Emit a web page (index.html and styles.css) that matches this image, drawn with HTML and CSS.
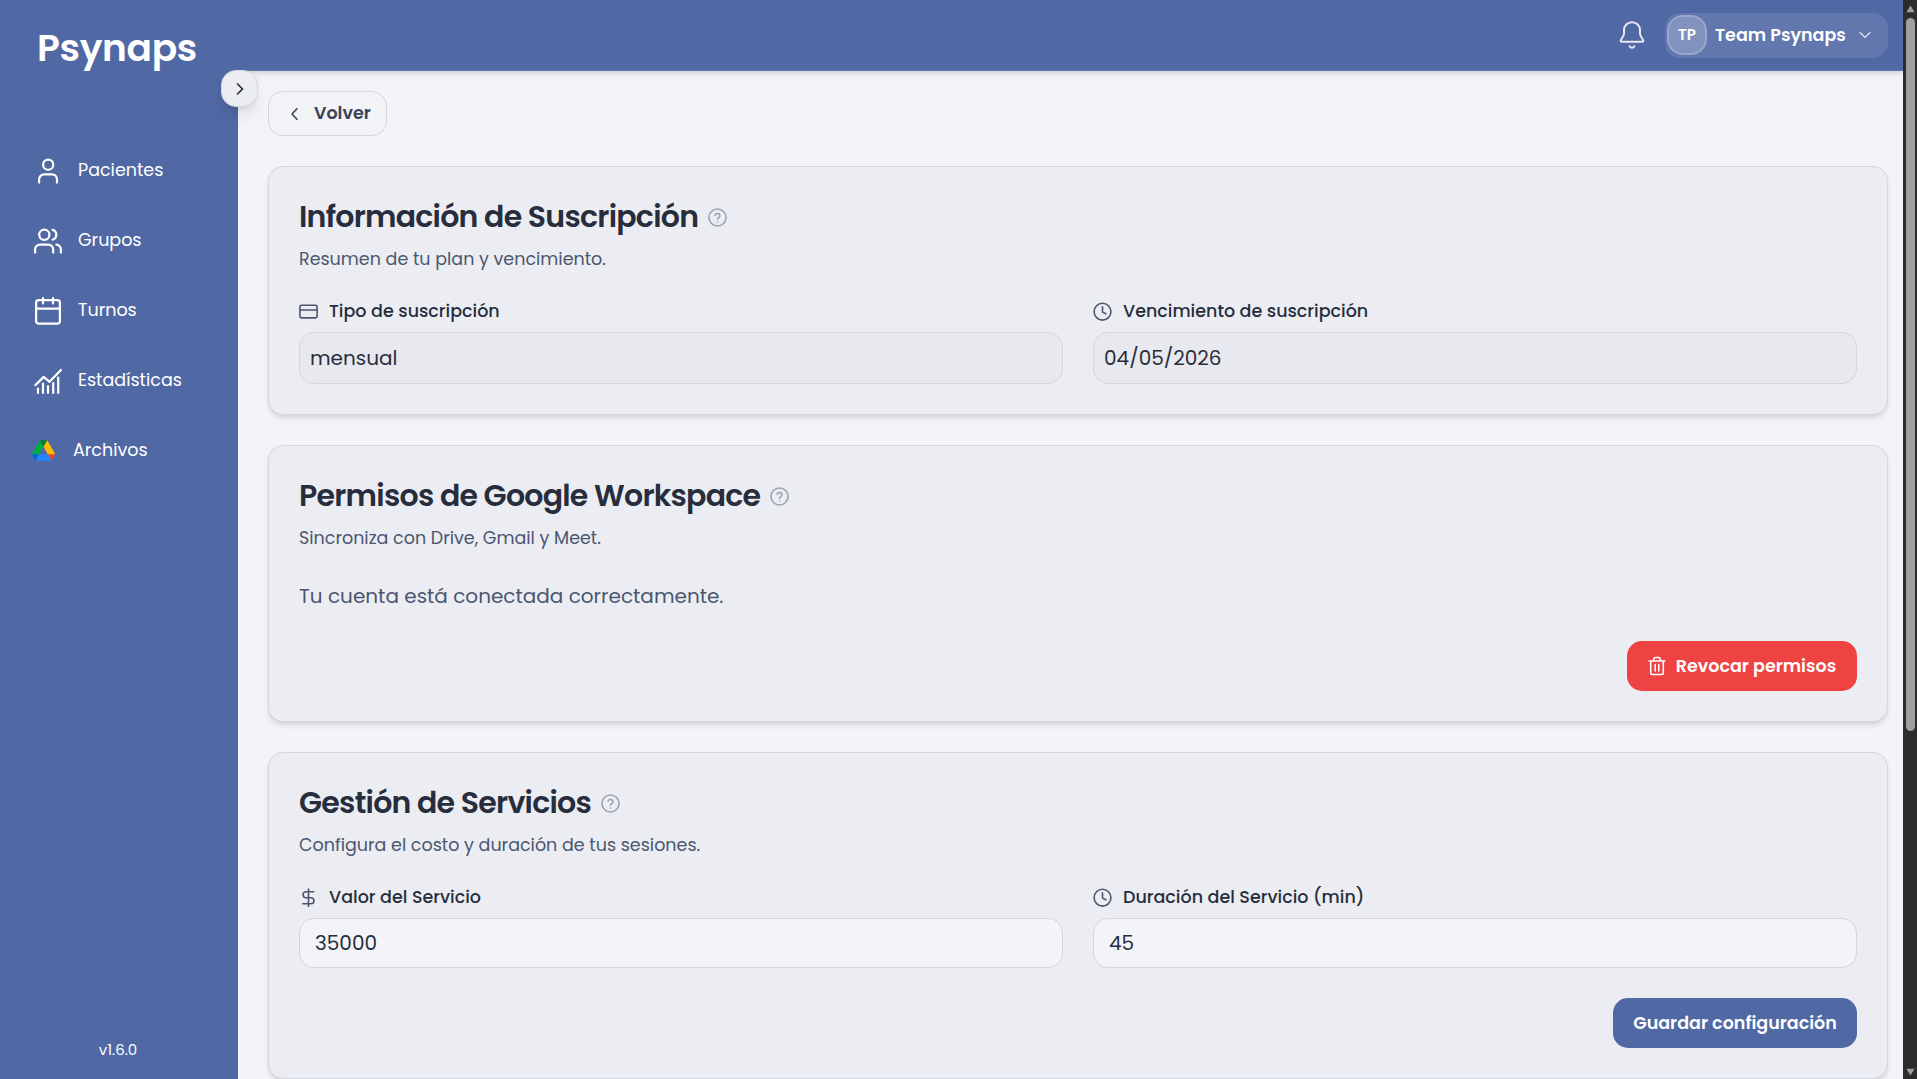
FILE: index.html
```html
<!DOCTYPE html>
<html lang="es">
<head>
    <meta charset="UTF-8">
    <meta name="viewport" content="width=device-width, initial-scale=1.0">
    <title>Psynaps - Configuración</title>
    <link rel="stylesheet" href="styles.css">
</head>
<body>

<div class="app">
    <!-- Sidebar -->
    <aside class="sidebar">
        <div class="brand">Psynaps</div>
        <nav class="menu">
            <a class="menu-item">
                <svg class="menu-icon" viewBox="0 0 28 30">
                    <circle cx="14.2" cy="8.7" r="5.1"/>
                    <path d="M5.1 26.6v-3.2a5 5 0 0 1 5-5h7.9a5 5 0 0 1 5 5v3.2"/>
                </svg>
                <span>Pacientes</span>
            </a>
            <a class="menu-item">
                <svg class="menu-icon" viewBox="0 0 28 30">
                    <circle cx="10.3" cy="8.8" r="5.1"/>
                    <path d="M18.6 3.9a5.1 5.1 0 0 1 0 9.8M1.1 26.6v-3a5 5 0 0 1 5-5h8.1a5 5 0 0 1 5 5v3M22.4 18.7a5 5 0 0 1 4.5 5v2.9"/>
                </svg>
                <span>Grupos</span>
            </a>
            <a class="menu-item">
                <svg class="menu-icon" viewBox="0 0 28 30">
                    <rect x="2.1" y="4.1" width="23.8" height="23.6" rx="2.6"/>
                    <path d="M2.1 12.6h23.8M9 2.2v5.2M19 2.2v5.2"/>
                </svg>
                <span>Turnos</span>
            </a>
            <a class="menu-item">
                <svg class="menu-icon" viewBox="0 0 28 30">
                    <path d="M1.4 19.1l8.3-8.2 5.8 4.9L26.9 4"/>
                    <path class="bars" d="M4 27.7v-6M9 27.7v-11M14 27.7v-8.4M19.2 27.7V16.3M24.2 27.7v-17"/>
                </svg>
                <span>Estadísticas</span>
            </a>
            <a class="menu-item archivos">
                <svg class="drive-icon" viewBox="0 0 87.3 78">
                    <path fill="#0066da" d="m6.6 66.85 3.85 6.65c.8 1.4 1.95 2.5 3.3 3.3l13.75-23.8h-27.5c0 1.55.4 3.1 1.2 4.5z"/>
                    <path fill="#00ac47" d="m43.65 25-13.75-23.8c-1.35.8-2.5 1.9-3.3 3.3l-25.4 44a9.06 9.06 0 0 0 -1.2 4.5h27.5z"/>
                    <path fill="#ea4335" d="m73.55 76.8c1.35-.8 2.5-1.9 3.3-3.3l1.6-2.75 7.65-13.25c.8-1.4 1.2-2.95 1.2-4.5h-27.5l5.85 11.5z"/>
                    <path fill="#00832d" d="m43.65 25 13.75-23.8c-1.35-.8-2.9-1.2-4.5-1.2h-18.5c-1.6 0-3.15.45-4.5 1.2z"/>
                    <path fill="#2684fc" d="m59.8 53h-32.3l-13.75 23.8c1.35.8 2.9 1.2 4.5 1.2h50.8c1.6 0 3.15-.45 4.5-1.2z"/>
                    <path fill="#ffba00" d="m73.4 26.5-12.7-22c-.8-1.4-1.95-2.5-3.3-3.3l-13.75 23.8 16.15 28h27.45c0-1.55-.4-3.1-1.2-4.5z"/>
                </svg>
                <span>Archivos</span>
            </a>
        </nav>
        <div class="version">v1.6.0</div>
        <button class="toggle" aria-label="Expandir menú">
            <svg viewBox="0 0 12 14"><path d="M3.5 2l5 5-5 5"/></svg>
        </button>
    </aside>

    <div class="page">
        <!-- Top bar -->
        <header class="topbar">
            <svg class="bell" viewBox="0 0 26 30">
                <path d="M13 2.2c-4.6 0-8 3.5-8 8.1v3.2c0 3-3.4 6.1-3.4 7.2 0 .7.5 1.1 1.2 1.1h20.4c.7 0 1.2-.4 1.2-1.1 0-1.1-3.4-4.2-3.4-7.2v-3.2c0-4.6-3.4-8.1-8-8.1z"/>
                <path d="M10.6 26.2c.5 1 1.4 1.5 2.4 1.5s1.9-.5 2.4-1.5"/>
            </svg>
            <div class="user">
                <span class="avatar">TP</span>
                <span class="user-name">Team Psynaps</span>
                <svg class="user-arrow" viewBox="0 0 12 8"><path d="M1 1.5l5 5 5-5"/></svg>
            </div>
        </header>

        <main class="content">
            <button class="back">
                <svg viewBox="0 0 12 14"><path d="M8 1.8L3 7l5 5.2"/></svg>
                <span>Volver</span>
            </button>

            <!-- Suscripción -->
            <section class="card">
                <h2>
                    <span>Información de Suscripción</span>
                    <svg class="help" viewBox="0 0 24 24"><circle cx="12" cy="12" r="10.8"/><path d="M8.9 9.2a3.1 3.1 0 0 1 6.1.9c0 2.1-3 2.7-3 4.1M12 17.6v.1"/></svg>
                </h2>
                <p class="subtitle">Resumen de tu plan y vencimiento.</p>
                <div class="fields">
                    <div class="field">
                        <label>
                            <svg class="label-icon" viewBox="0 0 19 19"><rect x=".9" y="3.3" width="17.2" height="12.6" rx="1.6"/><path d="M.9 8h17.2"/></svg>
                            Tipo de suscripción
                        </label>
                        <div class="readonly">mensual</div>
                    </div>
                    <div class="field">
                        <label>
                            <svg class="label-icon" viewBox="0 0 19 19"><circle cx="9.5" cy="9.7" r="8.4"/><path d="M9.5 4.8v5.3l3.4 1.7"/></svg>
                            Vencimiento de suscripción
                        </label>
                        <div class="readonly">04/05/2026</div>
                    </div>
                </div>
            </section>

            <!-- Google Workspace -->
            <section class="card">
                <h2>
                    <span>Permisos de Google Workspace</span>
                    <svg class="help" viewBox="0 0 24 24"><circle cx="12" cy="12" r="10.8"/><path d="M8.9 9.2a3.1 3.1 0 0 1 6.1.9c0 2.1-3 2.7-3 4.1M12 17.6v.1"/></svg>
                </h2>
                <p class="subtitle">Sincroniza con Drive, Gmail y Meet.</p>
                <p class="status">Tu cuenta está conectada correctamente.</p>
                <div class="actions">
                    <button class="btn btn-danger">
                        <svg viewBox="0 0 18 20"><path d="M1.2 5h15.6M5.2 5l.7-2.5q.3-1 1.3-1h3.6q1 0 1.3 1l.7 2.5M2.7 5v11.8q0 1.7 1.7 1.7h9.2q1.7 0 1.7-1.7V5M7.2 8.5v6.5M10.8 8.5v6.5"/></svg>
                        Revocar permisos
                    </button>
                </div>
            </section>

            <!-- Servicios -->
            <section class="card">
                <h2>
                    <span>Gestión de Servicios</span>
                    <svg class="help" viewBox="0 0 24 24"><circle cx="12" cy="12" r="10.8"/><path d="M8.9 9.2a3.1 3.1 0 0 1 6.1.9c0 2.1-3 2.7-3 4.1M12 17.6v.1"/></svg>
                </h2>
                <p class="subtitle">Configura el costo y duración de tus sesiones.</p>
                <div class="fields">
                    <div class="field">
                        <label for="valor">
                            <svg class="label-icon" viewBox="0 0 19 19"><path d="M9.5 1v17.5M14.8 3.7H7.1a3 3 0 0 0 0 6h4.8a3 3 0 0 1 0 6.1H3.8"/></svg>
                            Valor del Servicio
                        </label>
                        <input type="text" id="valor" value="35000">
                    </div>
                    <div class="field">
                        <label for="duracion">
                            <svg class="label-icon" viewBox="0 0 19 19"><circle cx="9.5" cy="9.7" r="8.4"/><path d="M9.5 4.8v5.3l3.4 1.7"/></svg>
                            Duración del Servicio (min)
                        </label>
                        <input type="text" id="duracion" value="45">
                    </div>
                </div>
                <div class="actions">
                    <button class="btn btn-primary">Guardar configuración</button>
                </div>
            </section>
        </main>
    </div>

    <!-- Scrollbar -->
    <div class="scrollbar">
        <svg viewBox="0 0 9 8"><path d="M4.5 .5L8.6 7.3H.4z"/></svg>
        <div class="thumb"></div>
        <svg viewBox="0 0 9 8"><path d="M4.5 7.5L8.6 .7H.4z"/></svg>
    </div>
</div>

</body>
</html>
```

FILE: styles.css
```css
* {
    box-sizing: border-box;
}
body {
    margin: 0;
    font-family: Poppins, Inter, sans-serif;
    font-size: 17.5px;
    color: #272d3d;
    background: #f3f4f8;
    overflow: hidden;
}
svg {
    flex: none;
    fill: none;
    stroke: currentColor;
    stroke-linecap: round;
    stroke-linejoin: round;
}
button {
    font-family: inherit;
    font-size: inherit;
    cursor: pointer;
}
.app {
    display: flex;
    height: 100vh;
}

/* Sidebar */
.sidebar {
    position: relative;
    z-index: 2;
    flex: none;
    display: flex;
    flex-direction: column;
    width: 238px;
    padding-top: 23px;
    background: #5068a4;
    color: #fff;
}
.brand {
    padding-left: 37px;
    font-size: 37.5px;
    font-weight: 600;
    line-height: 50px;
    letter-spacing: -0.3px;
}
.menu {
    display: flex;
    flex-direction: column;
    gap: 40px;
    margin-top: 82px;
}
.menu-item {
    display: flex;
    align-items: flex-start;
    gap: 16px;
    height: 30px;
    padding-left: 34px;
    line-height: 30px;
}
.menu-icon {
    width: 28px;
    height: 30px;
    margin-top: 1px;
    stroke-width: 2.2;
}
.menu-icon .bars {
    stroke-linecap: butt;
}
.archivos {
    gap: 18px;
    padding-left: 32px;
}
.drive-icon {
    width: 23px;
    height: 21px;
    margin-top: 5px;
    stroke: none;
}
.version {
    margin: auto 0 18px;
    padding-right: 2px;
    font-size: 15px;
    line-height: 22px;
    text-align: center;
}
.toggle {
    position: absolute;
    top: 70px;
    left: 221px;
    display: flex;
    align-items: center;
    justify-content: center;
    width: 37px;
    height: 37px;
    padding: 0;
    border: 1px solid #d3d5e0;
    border-radius: 15px;
    background: #ecedf2;
    color: #272d3d;
    box-shadow: 0 10px 15px -3px rgba(0, 0, 0, 0.1), 0 4px 6px -4px rgba(0, 0, 0, 0.1);
}
.toggle svg {
    width: 12px;
    height: 14px;
    margin-top: 1px;
    stroke-width: 1.7;
}

/* Page */
.page {
    flex: 1;
    display: flex;
    flex-direction: column;
}
.topbar {
    flex: none;
    display: flex;
    align-items: center;
    justify-content: flex-end;
    gap: 20px;
    height: 71px;
    padding-right: 15px;
    background: #5068a4;
    border-bottom: 1px solid #6177ad;
    color: #fff;
    box-shadow: 0 4px 6px -1px rgba(0, 0, 0, 0.1), 0 2px 4px -2px rgba(0, 0, 0, 0.1);
}
.bell {
    width: 26px;
    height: 30px;
    stroke-width: 2;
    opacity: 0.85;
}
.user {
    display: flex;
    align-items: center;
    width: 223px;
    height: 45px;
    padding: 0 17px 0 2px;
    border-radius: 15px;
    background: rgba(255, 255, 255, 0.1);
}
.avatar {
    width: 40px;
    height: 40px;
    margin-right: 8px;
    border: 2px solid rgba(255, 255, 255, 0.2);
    border-radius: 16px;
    background: rgba(255, 255, 255, 0.2);
    font-size: 15px;
    font-weight: 600;
    line-height: 36px;
    text-align: center;
}
.user-name {
    font-weight: 600;
}
.user-arrow {
    width: 12px;
    height: 8px;
    margin-left: auto;
    stroke-width: 1.2;
    opacity: 0.8;
}
.content {
    padding: 20px 15px 0 30px;
}
.back {
    display: flex;
    align-items: center;
    gap: 13px;
    width: 119px;
    height: 45px;
    margin-bottom: 30px;
    padding: 0 0 0 20px;
    border: 1px solid #d3d5e0;
    border-radius: 15px;
    background: transparent;
    color: #3d4354;
    font-weight: 600;
}
.back svg {
    width: 12px;
    height: 14px;
    stroke-width: 1.6;
}
.back span {
    margin-top: -2px;
}

/* Cards */
.card {
    margin-bottom: 30px;
    padding: 30px;
    border: 1px solid #d3d5e0;
    border-radius: 15px;
    background: #ecedf2;
    box-shadow: 0 4px 6px -1px rgba(0, 0, 0, 0.1), 0 2px 4px -2px rgba(0, 0, 0, 0.1);
}
.card h2 {
    display: flex;
    align-items: center;
    gap: 10px;
    margin: 0;
    font-size: 30px;
    font-weight: 600;
    line-height: 40px;
    letter-spacing: -0.025em;
}
.help {
    width: 19px;
    height: 19px;
    stroke-width: 2;
    color: #9ca1b3;
}
.subtitle {
    margin: 9px 0 0;
    color: #4a5670;
    line-height: 26px;
}
.fields {
    display: grid;
    grid-template-columns: 1fr 1fr;
    gap: 30px;
    margin-top: 26px;
}
.field label {
    display: flex;
    align-items: center;
    gap: 11px;
    margin-bottom: 8px;
    font-weight: 500;
    line-height: 26px;
}
.label-icon {
    width: 19px;
    height: 19px;
    margin-top: 1px;
    stroke-width: 1.6;
    color: #4a5670;
}
.readonly,
.field input {
    display: block;
    width: 100%;
    border: 1px solid #d3d5e0;
    border-radius: 15px;
    color: #272d3d;
    font-family: inherit;
    font-size: 20px;
}
.readonly {
    height: 52px;
    padding: 0 10px;
    background: #e8e9ee;
    line-height: 50px;
}
.field input {
    height: 50px;
    padding: 0 15px;
    background: #f3f4f8;
}
.status {
    margin: 30px 0 0;
    color: #4a5670;
    font-size: 20px;
    line-height: 30px;
}
.actions {
    display: flex;
    justify-content: flex-end;
    margin-top: 30px;
}
.btn {
    display: flex;
    align-items: center;
    justify-content: center;
    height: 50px;
    padding: 0;
    border: none;
    border-radius: 15px;
    color: #fff;
    font-weight: 600;
}
.btn-danger {
    gap: 10px;
    width: 230px;
    background: #ef4343;
}
.btn-danger svg {
    width: 18px;
    height: 20px;
    stroke-width: 1.6;
}
.btn-primary {
    width: 244px;
    background: #5068a4;
}

/* Scrollbar */
.scrollbar {
    flex: none;
    display: flex;
    flex-direction: column;
    align-items: center;
    width: 14px;
    padding: 5px 0 3px;
    background: #2c2c2c;
}
.scrollbar svg {
    width: 9px;
    height: 8px;
    fill: #9f9f9f;
    stroke: none;
}
.thumb {
    width: 9px;
    height: 713px;
    margin: 5px 0 auto;
    border-radius: 5px;
    background: #9f9f9f;
}
```
